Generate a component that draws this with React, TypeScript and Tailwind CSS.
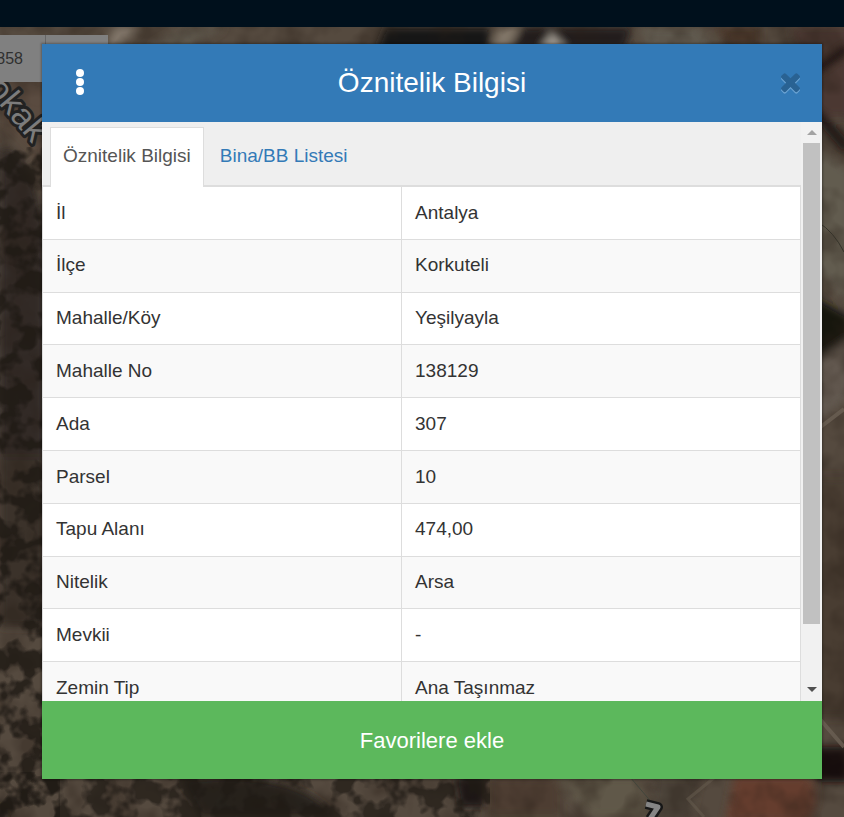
import { useState } from "react";

const rows = [
  ["İl", "Antalya"],
  ["İlçe", "Korkuteli"],
  ["Mahalle/Köy", "Yeşilyayla"],
  ["Mahalle No", "138129"],
  ["Ada", "307"],
  ["Parsel", "10"],
  ["Tapu Alanı", "474,00"],
  ["Nitelik", "Arsa"],
  ["Mevkii", "-"],
  ["Zemin Tip", "Ana Taşınmaz"],
];

const SatelliteMap = () => (
  <svg
    className="absolute inset-0 w-full h-full"
    viewBox="0 0 844 790"
    preserveAspectRatio="xMidYMid slice"
    aria-hidden="true"
  >
    <defs>
      <filter id="soft" x="-20%" y="-20%" width="140%" height="140%">
        <feGaussianBlur stdDeviation="4" />
      </filter>
      {/* tree crowns */}
      <filter id="trees" x="0" y="0" width="100%" height="100%" colorInterpolationFilters="sRGB">
        <feTurbulence type="fractalNoise" baseFrequency="0.045" numOctaves="3" seed="8" />
        <feColorMatrix values="0 0 0 0 0.12  0 0 0 0 0.1  0 0 0 0 0.08  6 0 0 0 -2.6" />
      </filter>
      <filter id="soil" x="0" y="0" width="100%" height="100%" colorInterpolationFilters="sRGB">
        <feTurbulence type="fractalNoise" baseFrequency="0.03" numOctaves="3" seed="3" />
        <feColorMatrix values="0 0 0 0 0.16  0 0 0 0 0.12  0 0 0 0 0.09  3 0 0 0 -1.2" />
      </filter>
    </defs>
    <rect width="844" height="790" fill="#554a3f" />
    <g filter="url(#soft)">
      <path d="M0 40L50 55V180L30 130L0 100Z" fill="#5a4c3f" />
      <path d="M0 120Q30 120 45 200V430L0 450Z" fill="#302b26" />
      <path d="M0 430H45V600H0Z" fill="#3a332c" />
      <path d="M0 770L12 790H0Z" fill="#15120f" />
      <path d="M115 0H140L120 20H105Z" fill="#82776a" />
      <path d="M185 0H225L190 20H150Z" fill="#5d564c" />
      <path d="M385 0H490V25H375Z" fill="#171716" />
      <path d="M500 0H520L508 20H492Z" fill="#827769" />
      <path d="M522 0H632L625 22H512Z" fill="#221d1b" />
      <path d="M540 22L552 5L567 22Z" fill="#a09a90" />
      <path d="M638 0H700L715 25H650Z" fill="#5f594d" />
      <path d="M715 0H760V20H730Z" fill="#4b382c" />
      <path d="M790 0H850V90H820Z" fill="#4c3930" />
      <path d="M816 44L848 20M816 85L848 122" stroke="#15110e" strokeWidth="10" />
      <path d="M815 120L850 145V280L815 240Z" fill="#625c50" />
      <path d="M815 270L850 290V320L815 335Z" fill="#15120e" />
      <path d="M815 335L850 310V370L815 395Z" fill="#625950" />
      <path d="M815 450H850V690H815Z" fill="#4a3d30" />
      <path d="M815 720H850V755H815Z" fill="#12100d" />
      <path d="M180 752Q300 740 335 790H200Z" fill="#25211c" />
      <path d="M455 750H485V780H460Z" fill="#1f1914" />
      <path d="M488 750H560V790H488Z" fill="#4d3d32" />
      <path d="M555 750H640L650 790H590Z" fill="#615849" />
      <path d="M655 750H700L690 790H650Z" fill="#4d453b" />
      <path d="M735 748H805Q826 765 808 795H725Z" fill="#653c2e" />
    </g>
    <rect width="844" height="790" filter="url(#soil)" opacity="0.35" />
    <rect y="120" width="60" height="670" filter="url(#trees)" opacity="0.8" />
    <rect y="745" width="490" height="45" filter="url(#trees)" opacity="0.7" />
    <path d="M715 750L688 772L704 790" stroke="#675d50" strokeWidth="3" fill="none" opacity="0.5" />
    <path d="M818 402L844 382M818 690L844 720" stroke="#6b6054" strokeWidth="4" opacity="0.8" />
    <path d="M630 750L653 777" stroke="#42453b" strokeWidth="1" />
    <path d="M818 195Q834 205 844 225" stroke="#35332a" strokeWidth="1" fill="none" />
    <text
      transform="translate(-14 62) rotate(50)"
      fontFamily="'Liberation Sans', Arial, sans-serif"
      fontSize="34"
      fill="#7c7c7c"
      stroke="#222222"
      strokeWidth="6"
      paintOrder="stroke"
      strokeLinejoin="round"
    >
      okak
    </text>
    <path d="M646 777L658 780L650 792" fill="none" stroke="#171717" strokeWidth="10" strokeLinejoin="round" />
    <path d="M646 777L658 780L650 792" fill="none" stroke="#858585" strokeWidth="5" strokeLinejoin="round" />
  </svg>
);

const Scrollbar = () => (
  <div className="flex flex-col w-[21px] shrink-0 bg-[#f1f1f1]">
    <button type="button" aria-label="Yukarı" className="flex h-[21px] items-center justify-center">
      <svg width="10" height="5" viewBox="0 0 10 5" fill="#a3a3a3">
        <path d="M0 5L5 0L10 5Z" />
      </svg>
    </button>
    <div className="flex-1 px-[2px]">
      <div className="h-[90%] bg-[#c1c1c1]"></div>
    </div>
    <button type="button" aria-label="Aşağı" className="flex h-6 items-center justify-center">
      <svg width="10" height="5" viewBox="0 0 10 5" fill="#505050">
        <path d="M0 0L5 5L10 0Z" />
      </svg>
    </button>
  </div>
);

const timesPath =
  "M1490 1322q0 40-28 68l-136 136q-28 28-68 28t-68-28l-294-294-294 294q-28 28-68 28t-68-28l-136-136q-28-28-28-68t28-68l294-294-294-294q-28-28-28-68t28-68l136-136q28-28 68-28t68 28l294 294 294-294q28-28 68-28t68 28l136 136q28 28 28 68t-28 68l-294 294 294 294q28 28 28 68z";

const DialogHeader = ({ onClose }) => (
  <div className="flex h-[78px] shrink-0 items-center justify-between bg-[#337ab7] px-[21px] text-white">
    <button type="button" aria-label="Menü" className="flex w-[34px] justify-center cursor-pointer">
      <svg width="10" height="28" viewBox="0 0 10 28" fill="currentColor">
        <circle cx="5" cy="4" r="4" />
        <circle cx="5" cy="13" r="4" />
        <circle cx="5" cy="22" r="4" />
      </svg>
    </button>
    <h1 className="text-[28px]">Öznitelik Bilgisi</h1>
    <button type="button" aria-label="Kapat" onClick={onClose} className="flex w-[34px] justify-end cursor-pointer">
      <svg width="21" height="22" viewBox="240 290 1312 1376">
        <path transform="translate(0 90)" fill="#6ba3d3" d={timesPath} />
        <path fill="#296293" d={timesPath} />
      </svg>
    </button>
  </div>
);

export default function App() {
  const [tab, setTab] = useState("info");
  const [open, setOpen] = useState(true);

  const active = "border-[#dddddd] bg-white text-[#555555]";
  const passive = "border-transparent text-[#337ab7]";

  return (
    <div className="flex h-screen flex-col overflow-hidden font-['Liberation_Sans',Arial,sans-serif] text-[19px] text-[#333333]">
      <header className="h-[27px] shrink-0 bg-[#00101c]"></header>
      <main className="relative flex min-h-0 flex-1 flex-col overflow-hidden bg-[#554a3f] pt-[17px] pr-[22px] pb-[38px] pl-[42px]">
        <SatelliteMap />
        <div className="absolute left-0 top-2 flex h-[47px] w-[108px] items-center bg-[#808080] text-base text-[#303030]">
          <div className="flex h-full w-[46px] items-center justify-end border-r border-[#666666] pr-[22px]">858</div>
        </div>

        {open && (
          <div
            role="dialog"
            aria-label="Öznitelik Bilgisi"
            className="relative flex min-h-0 flex-1 flex-col bg-white shadow-[0_0_2px_1px_rgba(0,0,0,0.3)]"
          >
            <DialogHeader onClose={() => setOpen(false)} />
            <div className="flex min-h-0 flex-1 overflow-hidden">
              <div className="min-w-0 flex-1 overflow-hidden">
                <div className="flex h-16 items-end gap-[3px] border-b border-[#dddddd] bg-[#efefef] px-2">
                  <button
                    type="button"
                    onClick={() => setTab("info")}
                    className={`-mb-[2px] h-[60px] cursor-pointer border border-b-0 px-3 pb-[2px] ${tab == "info" ? active : passive}`}
                  >
                    Öznitelik Bilgisi
                  </button>
                  <button
                    type="button"
                    onClick={() => setTab("list")}
                    className={`-mb-[2px] h-[60px] cursor-pointer border border-b-0 px-3 pb-[2px] ${tab == "list" ? active : passive}`}
                  >
                    Bina/BB Listesi
                  </button>
                </div>
                {tab == "info" && (
                  <table className="h-[529px] w-full table-fixed border-collapse border border-[#dddddd]">
                    <colgroup>
                      <col className="w-9/19" />
                      <col />
                    </colgroup>
                    <tbody>
                      {rows.map(([name, value]) => (
                        <tr key={name} className="even:bg-[#f9f9f9]">
                          <th scope="row" className="border border-[#dddddd] px-[13px] text-left font-normal">
                            {name}
                          </th>
                          <td className="border border-[#dddddd] px-[13px]">{value}</td>
                        </tr>
                      ))}
                    </tbody>
                  </table>
                )}
              </div>
              <Scrollbar />
            </div>
            <button type="button" className="h-[78px] shrink-0 cursor-pointer bg-[#5cb85c] text-[22px] text-white">
              Favorilere ekle
            </button>
          </div>
        )}
      </main>
    </div>
  );
}
